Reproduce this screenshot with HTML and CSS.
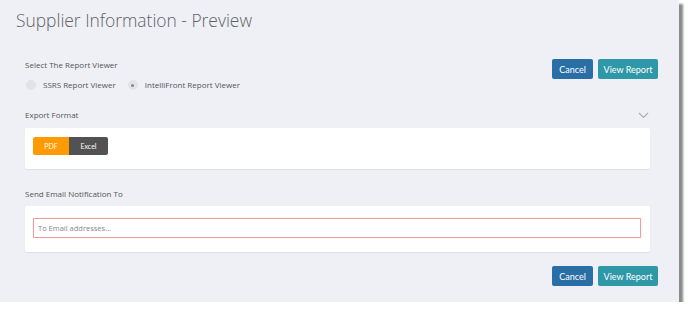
FILE: index.html
```html
<!DOCTYPE html>
<html>
<head>
<meta charset="utf-8">
<link rel="stylesheet" href="styles.css">
</head>
<body>
<div class="window">
  <h1 class="title">Supplier Information - Preview</h1>
  <div class="top-row">
    <div class="viewer">
      <div class="label">Select The Report Viewer</div>
      <div class="radios">
        <label class="radio"><span class="dot"></span>SSRS Report Viewer</label>
        <label class="radio"><span class="dot checked"></span>IntelliFront Report Viewer</label>
      </div>
    </div>
    <div class="actions">
      <button class="btn cancel">Cancel</button>
      <button class="btn view">View Report</button>
    </div>
  </div>
  <div class="section-head">
    <div class="label">Export Format</div>
    <svg class="chevron" width="11" height="7" viewBox="0 0 11 7"><path d="M1 1l4.5 4.5L10 1" fill="none" stroke="#aab0b8" stroke-width="1.2"/></svg>
  </div>
  <div class="panel export">
    <div class="seg">
      <span class="seg-btn pdf">PDF</span>
      <span class="seg-btn excel">Excel</span>
    </div>
  </div>
  <div class="label email-label">Send Email Notification To</div>
  <div class="panel email">
    <input class="email-input" type="text" placeholder="To Email addresses...">
  </div>
  <div class="actions bottom">
    <button class="btn cancel">Cancel</button>
    <button class="btn view">View Report</button>
  </div>
</div>
</body>
</html>
```
FILE: styles.css
```css
html, body {
  margin: 0;
  padding: 0;
  background: #ffffff;
}
body {
  font-family: "Open Sans", "Liberation Sans", sans-serif;
  color: #555;
}
.window {
  width: 679px;
  height: 302px;
  background: #eef0f5;
  box-shadow: 4px 4px 2px #8a8a8a;
  box-sizing: border-box;
  display: flex;
  flex-direction: column;
}
.title {
  margin: 0;
  padding: 6px 0 0 16px;
  font-size: 17.4px;
  font-weight: 300;
  color: #606266;
  line-height: 28px;
}
.top-row {
  display: flex;
  justify-content: space-between;
  padding: 25px 21px 0 25px;
}
.label {
  font-size: 8px;
  color: #555;
  line-height: 12px;
}
.radios {
  display: flex;
  gap: 11px;
  margin-top: 8px;
}
.radio {
  display: flex;
  align-items: center;
  font-size: 8px;
  color: #555;
  line-height: 12px;
}
.dot {
  width: 10px;
  height: 10px;
  border-radius: 50%;
  background: #e1e3e6;
  margin: 0 7px 0 1px;
  position: relative;
}
.dot.checked::after {
  content: "";
  position: absolute;
  left: 3.5px;
  top: 3.5px;
  width: 3px;
  height: 3px;
  border-radius: 50%;
  background: #888;
}
.actions {
  display: flex;
  gap: 5px;
  align-items: flex-start;
}
.btn {
  font-family: "Lato", "Liberation Sans", sans-serif;
  font-size: 9px;
  color: #fff;
  border: none;
  border-radius: 2px;
  height: 20px;
  padding: 0;
  margin: 0;
}
.cancel {
  background: #2a6ea6;
  width: 41px;
}
.view {
  background: #2e97a8;
  width: 60px;
}
.section-head {
  display: flex;
  justify-content: space-between;
  align-items: center;
  padding: 18px 30px 0 25px;
}
.chevron {
  display: block;
}
.panel {
  margin: 7px 29px 0 25px;
  background: #fff;
  border-radius: 2px;
  box-shadow: 0 1px 1px #dcdfe3;
  box-sizing: border-box;
}
.export {
  height: 41px;
  padding: 9px 8px;
}
.seg {
  display: flex;
  height: 18px;
}
.seg-btn {
  font-family: "Lato", "Liberation Sans", sans-serif;
  font-size: 7px;
  color: #fff;
  display: flex;
  align-items: center;
  justify-content: center;
}
.pdf {
  width: 36px;
  background: #ff9a00;
  border-radius: 2px 0 0 2px;
}
.excel {
  width: 39px;
  background: #525252;
  border-radius: 0 2px 2px 0;
}
.email-label {
  padding: 19px 0 0 25px;
}
.email {
  height: 46px;
  margin-top: 6px;
  padding: 12px 9px 0 8px;
}
.email-input {
  display: block;
  width: 100%;
  height: 20px;
  box-sizing: border-box;
  border: 1px solid #ee9c9c;
  box-shadow: 0 0 1px #f4b0b0;
  border-radius: 1px;
  padding: 0 4px;
  font-family: "Open Sans", "Liberation Sans", sans-serif;
  font-size: 7.5px;
  outline: none;
}
.email-input::placeholder {
  color: #888;
}
.actions.bottom {
  justify-content: flex-end;
  padding: 14px 21px 0 0;
}
```
